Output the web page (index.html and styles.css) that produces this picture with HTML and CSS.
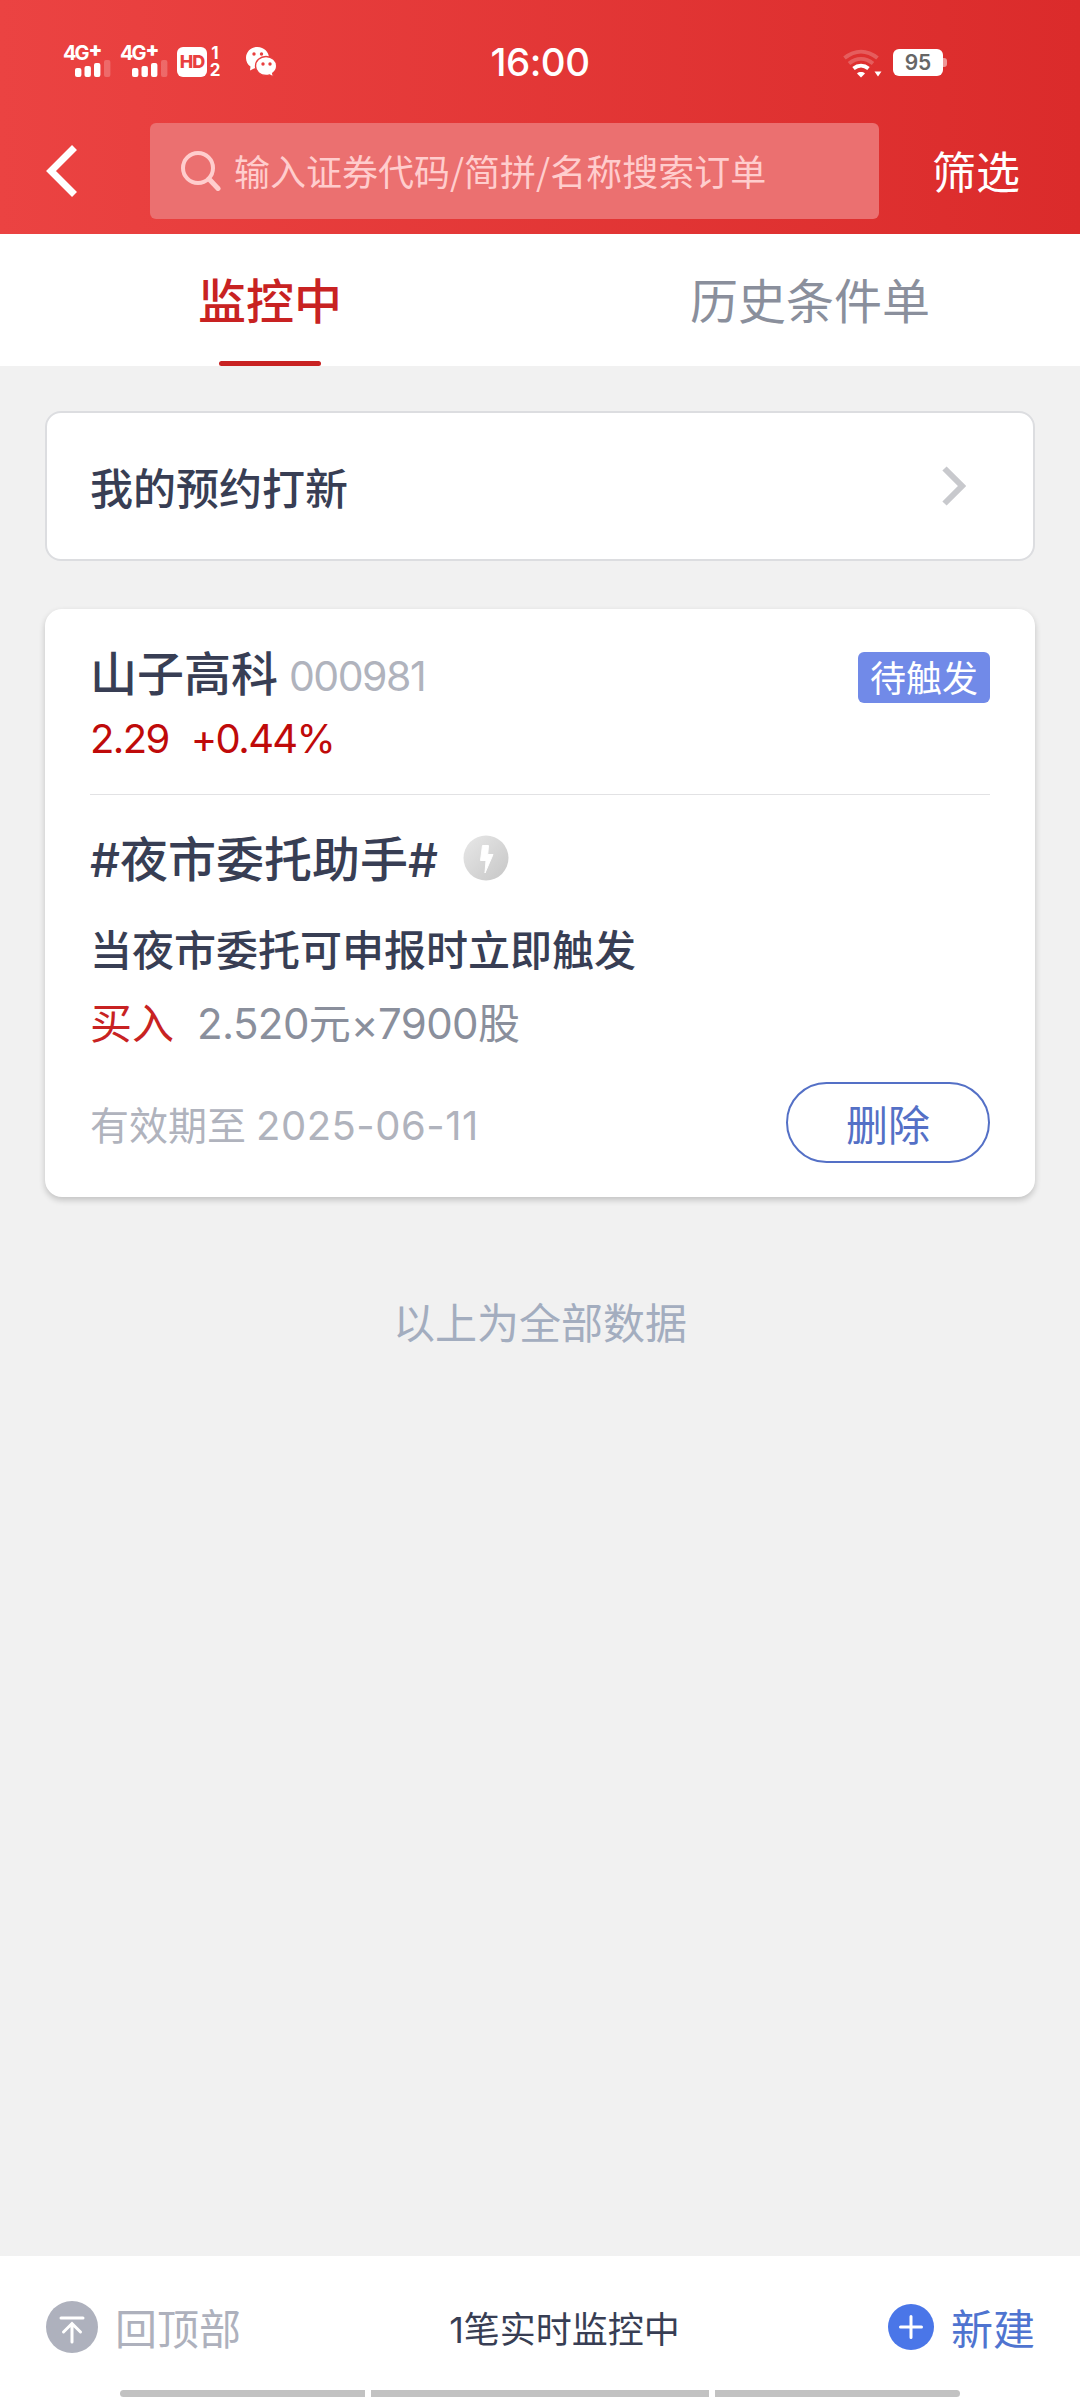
FILE: index.html
```html
<!DOCTYPE html>
<html lang="zh-CN">
  <head>
    <meta charset="utf-8">
    <title>条件单</title>
    <link rel="stylesheet" href="styles.css">
  </head>
  <body>
    <header class="header">
      <div class="status-bar">
        <div class="status-left">
          <div class="signal">
            <span class="net">4G<b>+</b></span>
            <svg class="bars" width="36" height="17" viewBox="0 0 36 17" fill="#fff"><rect x="0" y="8" width="6.4" height="9" rx="2"/><rect x="9.5" y="6" width="6.4" height="11" rx="2"/><rect x="19" y="3" width="6.4" height="14" rx="2"/><rect x="29" y="0" width="6.4" height="17" rx="2" opacity=".22"/></svg>
          </div>
          <div class="signal">
            <span class="net">4G<b>+</b></span>
            <svg class="bars" width="36" height="17" viewBox="0 0 36 17" fill="#fff"><rect x="0" y="8" width="6.4" height="9" rx="2"/><rect x="9.5" y="6" width="6.4" height="11" rx="2"/><rect x="19" y="3" width="6.4" height="14" rx="2"/><rect x="29" y="0" width="6.4" height="17" rx="2" opacity=".22"/></svg>
          </div>
          <div class="hd">HD</div>
          <div class="sims"><span>1</span><span>2</span></div>
          <svg class="wechat" width="31" height="30" viewBox="0 0 31 30">
            <path d="M11.5 0C5 0 0 4.8 0 11c0 3.6 1.8 6.600 4.500 8.500L4 23.500l4.500-2.300c1 .2 2 .3 3 .3C18 21.500 23 17 23 11S18 0 11.500 0z" fill="#fff"/>
            <path d="M20 9.500c-6 0-10.500 4.200-10.500 9.500S14 28.500 20 28.500c1.300 0 2.500-.2 3.600-.6L27.500 30l-.8-3.700c2.500-1.700 4-4.300 4-7.300 0-5.300-4.700-9.500-10.700-9.500z" fill="#fff" stroke="#e93f3f" stroke-width="1.400"/>
            <circle cx="8" cy="7" r="1.700" fill="#e93f3f"/><circle cx="15.500" cy="7" r="1.700" fill="#e93f3f"/>
            <circle cx="17" cy="17" r="1.700" fill="#e93f3f"/><circle cx="24" cy="17" r="1.700" fill="#e93f3f"/>
          </svg>
        </div>
        <div class="clock">16:00</div>
        <div class="status-right">
          <svg class="wifi" width="40" height="29" viewBox="0 0 40 29" fill="none" stroke="#fff">
            <path d="M1.500 9C12 .5 24 .5 34.500 9" stroke-width="4" opacity=".22"/>
            <path d="M6 14.500c7.500-6 16.500-6 24 0" stroke-width="4" opacity=".22"/>
            <path d="M10.500 19.500c4.500-3.700 10.500-3.700 15 0" stroke-width="3.800"/>
            <path d="M14 24.500c2-1.900 6-1.900 8 0l-4 4z" fill="#fff" stroke="none"/>
            <path d="M31.500 22.500h7l-3.500 5z" fill="#fff" stroke="none"/>
          </svg>
          <div class="battery">95</div>
          <div class="battery-tip"></div>
        </div>
      </div>
      <div class="nav">
        <svg class="back" width="32" height="52" viewBox="0 0 32 52"><path d="M28.500 2.500L5 26l23.500 23.500" fill="none" stroke="#fff" stroke-width="7"/></svg>
        <div class="search">
          <svg width="40" height="40" viewBox="0 0 40 40" fill="none" stroke="#ffcdcd" stroke-width="4"><circle cx="17" cy="17" r="15"/><path d="M28 28l9 9.500" stroke-width="5" stroke-linecap="round"/></svg>
          <span>输入证券代码/简拼/名称搜索订单</span>
        </div>
        <div class="filter">筛选</div>
      </div>
    </header>

    <div class="tabs">
      <div class="tab active">监控中</div>
      <div class="tab">历史条件单</div>
    </div>

    <main class="content">
      <div class="entry">
        <span>我的预约打新</span>
        <svg width="24" height="40" viewBox="0 0 24 40"><path d="M2.500 2.500L20 20 2.500 37.500" fill="none" stroke="#c8c9cd" stroke-width="6"/></svg>
      </div>

      <div class="order">
        <div class="order-head">
          <div class="stock">
            <div class="stock-name">山子高科<span class="code">000981</span></div>
            <div class="price"><span>2.29</span><span>+0.44%</span></div>
          </div>
          <div class="badge">待触发</div>
        </div>
        <div class="order-title">
          <span><i>#</i>夜市委托助手<i>#</i></span>
          <svg width="46" height="46" viewBox="0 0 46 46">
            <defs><linearGradient id="g" x1="0" y1="0" x2="1" y2="1"><stop offset="0" stop-color="#e8e8e8"/><stop offset="1" stop-color="#c6c6c6"/></linearGradient></defs>
            <circle cx="23" cy="23" r="22.500" fill="url(#g)"/>
            <path d="M19.500 10.500h6l-.8 9h5.300L22 38l1-12.500h-5.500z" fill="#fff" stroke="#fff" stroke-width="1" stroke-linejoin="round"/>
          </svg>
        </div>
        <div class="condition">当夜市委托可申报时立即触发</div>
        <div class="action"><span class="buy">买入</span><span><i>2.520</i>元<i>×7900</i>股</span></div>
        <div class="order-foot">
          <div class="expire">有效期至<span>2025-06-11</span></div>
          <div class="delete">删除</div>
        </div>
      </div>

      <div class="end">以上为全部数据</div>
    </main>

    <footer class="footer">
      <div class="toolbar">
        <div class="to-top">
          <svg width="52" height="52" viewBox="0 0 52 52"><circle cx="26" cy="26" r="26" fill="#aeb1bd"/><path d="M15 17h22M26 41V23M17.500 31l8.500-8.500 8.500 8.500" fill="none" stroke="#fff" stroke-width="3" stroke-linecap="round"/></svg>
          <span>回顶部</span>
        </div>
        <div class="count"><i>1</i>笔实时监控中</div>
        <div class="create">
          <svg width="46" height="46" viewBox="0 0 46 46"><circle cx="23" cy="23" r="23" fill="#4a76e8"/><path d="M23 12.500v21M12.500 23h21" stroke="#fff" stroke-width="3" stroke-linecap="round"/></svg>
          <span>新建</span>
        </div>
      </div>
      <div class="gesture"><span class="left"></span><span class="mid"></span><span class="right"></span></div>
    </footer>
  </body>
</html>
```
FILE: styles.css
```css
* {
  box-sizing: border-box;
}
body {
  margin: 0;
  height: 2400px;
  display: flex;
  flex-direction: column;
  background: #f1f1f1;
  color: #383e54;
  font-family: "Noto Sans CJK SC", sans-serif;
  white-space: nowrap;
}
svg {
  display: block;
  flex: none;
}
i {
  font-family: Inter, sans-serif;
  font-style: normal;
}

/* Header */
.header {
  height: 234px;
  background: linear-gradient(90deg, #eb4342, #db2b2b);
  color: #fff;
}
.status-bar {
  height: 123px;
  display: grid;
  grid-template-columns: 1fr auto 1fr;
  font-family: Inter, sans-serif;
}
.status-left {
  display: flex;
  align-items: flex-start;
  padding: 45px 0 0 63px;
}
.signal {
  width: 57px;
  height: 32px;
}
.net {
  display: flex;
  height: 15px;
  font-size: 20px;
  font-weight: 700;
  line-height: 16px;
  letter-spacing: -2px;
}
.net b {
  margin-left: 1px;
  line-height: 9px;
  font-weight: 900;
}
.bars {
  margin-left: 12px;
}
.hd {
  width: 30px;
  height: 30px;
  margin-top: 2px;
  border-radius: 6px;
  background: #fff;
  color: #e93f3f;
  font-size: 18px;
  font-weight: 800;
  line-height: 30px;
  letter-spacing: -1px;
  text-align: center;
}
.sims {
  width: 12px;
  margin: 2px 25px 0 2px;
  display: flex;
  flex-direction: column;
  gap: 4px;
  font-size: 17px;
  font-weight: 700;
  line-height: 13px;
  text-align: center;
}
.wechat {
  margin-top: 2px;
}
.clock {
  padding-top: 42px;
  font-size: 38.500px;
  font-weight: 500;
  line-height: 40px;
  letter-spacing: -0.500px;
}
.status-right {
  display: flex;
  align-items: flex-start;
  justify-content: flex-end;
  padding: 49px 133px 0 0;
}
.battery {
  width: 50px;
  height: 27px;
  margin-left: 10px;
  border-radius: 6px;
  background: #fff;
  color: #666;
  font-size: 21px;
  font-weight: 600;
  line-height: 28px;
  text-align: center;
}
.battery-tip {
  width: 4px;
  height: 9px;
  margin-top: 9px;
  border-radius: 0 3px 3px 0;
  background: rgba(255, 255, 255, 0.5);
}
.nav {
  height: 96px;
  display: flex;
  align-items: center;
}
.back {
  margin: 0 72px 0 46px;
}
.search {
  width: 729px;
  height: 96px;
  display: flex;
  align-items: center;
  gap: 13px;
  padding-left: 31px;
  border-radius: 6px;
  background: #eb7070;
  color: #ffcdcd;
  font-size: 36px;
}
.search span {
  padding-bottom: 2px;
}
.filter {
  margin-left: 53px;
  padding-bottom: 2px;
  font-size: 44px;
}

/* Tabs */
.tabs {
  height: 132px;
  display: flex;
  background: #fff;
}
.tab {
  flex: 1;
  display: flex;
  flex-direction: column;
  align-items: center;
  padding-top: 2px;
  color: #8a8f9c;
  font-size: 48px;
  line-height: 125px;
}
.tab.active {
  color: #c82222;
  font-weight: 500;
}
.tab.active::after {
  content: "";
  width: 102px;
  height: 5px;
  border-radius: 3px;
  background: #c82222;
}

/* Cards */
.content {
  flex: 1;
  padding: 45px 45px 0;
}
.entry {
  height: 150px;
  margin-bottom: 48px;
  display: flex;
  align-items: center;
  justify-content: space-between;
  padding: 0 67px 0 43px;
  border: 2px solid #dcdde0;
  border-radius: 16px;
  background: #fff;
  font-size: 43px;
  font-weight: 500;
}
.order {
  height: 588px;
  padding: 0 45px;
  border-radius: 17px;
  background: #fff;
  box-shadow: 0 3px 6px rgba(0, 0, 0, 0.2);
}
.order-head {
  height: 186px;
  display: flex;
  justify-content: space-between;
  align-items: flex-start;
  border-bottom: 1px solid #e2e2e4;
}
.stock {
  padding-top: 34px;
}
.stock-name {
  font-size: 47px;
  font-weight: 500;
  line-height: 56px;
}
.code {
  margin-left: 11px;
  color: #b0b3bd;
  font-family: Inter, sans-serif;
  font-size: 41px;
  font-weight: 400;
  letter-spacing: -1.500px;
}
.price {
  display: flex;
  gap: 22px;
  color: #bf0a0a;
  font-family: Inter, sans-serif;
  font-size: 40px;
  line-height: 70px;
  letter-spacing: -1.600px;
}
.badge {
  width: 132px;
  height: 51px;
  margin-top: 43px;
  border-radius: 6px;
  background: #718ae8;
  color: #fff;
  font-size: 36px;
  line-height: 48px;
  text-align: center;
}
.order-title {
  height: 125px;
  display: flex;
  align-items: center;
  gap: 25px;
  font-size: 48px;
  font-weight: 500;
}
.order-title span {
  padding-bottom: 3px;
}
.order-title i {
  font-size: 47px;
}
.condition {
  height: 60px;
  font-size: 42px;
  font-weight: 500;
  line-height: 56px;
}
.action {
  height: 84px;
  display: flex;
  gap: 23px;
  color: #8a8f9c;
  font-size: 42px;
  line-height: 82px;
}
.action i {
  letter-spacing: -0.600px;
}
.buy {
  color: #c82222;
}
.order-foot {
  display: flex;
  align-items: center;
  justify-content: space-between;
  padding-top: 18px;
}
.expire {
  color: #b0b3bd;
  font-size: 39px;
}
.expire span {
  margin-left: 10px;
  font-family: Inter, sans-serif;
  font-size: 40px;
  letter-spacing: 0.500px;
}
.delete {
  width: 204px;
  height: 81px;
  border: 2px solid #5470c6;
  border-radius: 41px;
  color: #5470c6;
  font-size: 42px;
  line-height: 77px;
  text-align: center;
}
.end {
  margin-top: 96px;
  color: #a3adbf;
  font-size: 42px;
  line-height: 56px;
  text-align: center;
}

/* Footer */
.footer {
  height: 144px;
  background: #fff;
}
.toolbar {
  height: 134px;
  display: flex;
  align-items: center;
  justify-content: space-between;
  padding: 8px 45px 0 46px;
  font-size: 36px;
}
.to-top,
.create {
  display: flex;
  align-items: center;
  gap: 17px;
  color: #aeb1bd;
  font-size: 42px;
}
.to-top span,
.create span {
  padding-bottom: 2px;
}
.create {
  color: #4f74d0;
}
.gesture {
  display: flex;
  justify-content: center;
  gap: 6px;
}
.gesture span {
  width: 245px;
  height: 7px;
  background: #c2c2c2;
}
.gesture .mid {
  width: 338px;
}
.gesture .left {
  border-radius: 4px 0 0 4px;
}
.gesture .right {
  border-radius: 0 4px 4px 0;
}
```
